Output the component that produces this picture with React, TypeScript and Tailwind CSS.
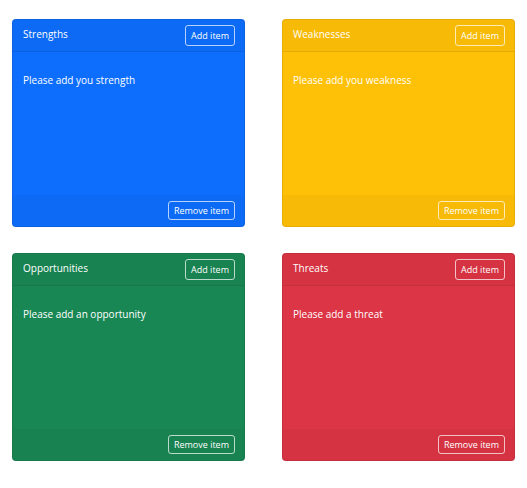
import React from "react";

type Card = { title: string; text: string; bg: string };

const cards: Card[] = [
  { title: "Strengths", text: "Please add you strength", bg: "bg-[#0d6efd]" },
  { title: "Weaknesses", text: "Please add you weakness", bg: "bg-[#ffc107]" },
  { title: "Opportunities", text: "Please add an opportunity", bg: "bg-[#198754]" },
  { title: "Threats", text: "Please add a threat", bg: "bg-[#dc3545]" },
];

function SwotCard({ c }: { c: Card }) {
  return (
    <div className={`${c.bg} h-[208px] rounded-[4px] border border-black/10 flex flex-col text-white overflow-hidden`}>
      <div className="h-[32px] shrink-0 bg-black/[0.03] border-b border-black/[0.08] flex items-center justify-between pl-[10px] pr-[9px]">
        <span className="text-[10px] font-medium leading-none -mt-[3px]">{c.title}</span>
        <button className="h-[21px] px-[5px] rounded-[3px] border border-white/70 text-[9px] font-medium leading-none text-white">
          Add item
        </button>
      </div>
      <div className="flex-1 pl-[10px] pt-[23px]">
        <p className="text-[10px] font-medium leading-none">{c.text}</p>
      </div>
      <div className="h-[31px] shrink-0 bg-black/[0.03] flex items-center justify-end pr-[9px]">
        <button className="h-[19px] px-[5px] rounded-[3px] border border-white/70 text-[9px] font-medium leading-none text-white">
          Remove item
        </button>
      </div>
    </div>
  );
}

export default function App() {
  return (
    <div className="w-[527px] h-[488px] bg-white font-['Open_Sans',sans-serif] antialiased">
      <div className="grid grid-cols-2 gap-x-[37px] gap-y-[26px] px-[12px] pt-[19px]">
        {cards.map((c) => (
          <SwotCard key={c.title} c={c} />
        ))}
      </div>
    </div>
  );
}
